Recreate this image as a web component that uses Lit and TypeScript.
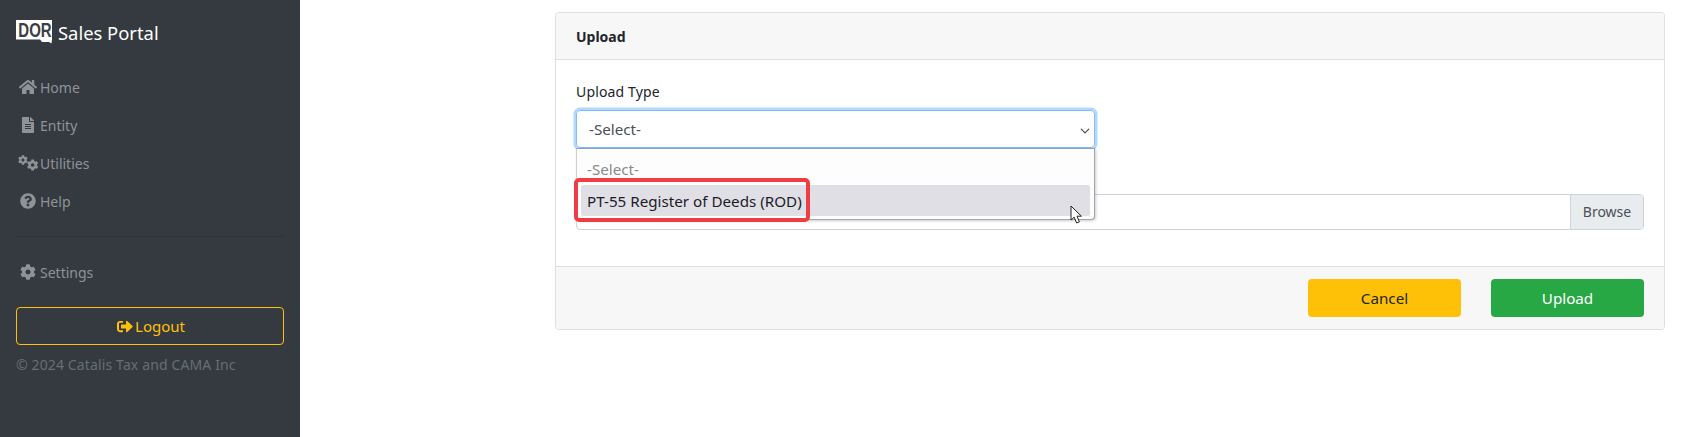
import { LitElement, html, css, svg } from "lit";
import { customElement } from "lit/decorators.js";

const COG = "M487.4 315.7l-42.6-24.6c4.3-23.2 4.3-47 0-70.2l42.6-24.6c4.9-2.8 7.1-8.6 5.5-14-11.1-35.6-30-67.8-54.7-94.6-3.8-4.1-10-5.1-14.8-2.3L380.8 110c-17.9-15.4-38.5-27.3-60.8-35.1V25.8c0-5.6-3.9-10.5-9.4-11.7-36.7-8.2-74.3-7.8-109.2 0-5.5 1.2-9.4 6.1-9.4 11.7V75c-22.2 7.9-42.8 19.8-60.8 35.1L88.7 85.5c-4.9-2.8-11-1.9-14.8 2.3-24.7 26.7-43.6 58.9-54.7 94.6-1.7 5.4.6 11.2 5.5 14L67.3 221c-4.3 23.2-4.3 47 0 70.2l-42.6 24.6c-4.9 2.8-7.1 8.6-5.5 14 11.1 35.6 30 67.8 54.7 94.6 3.8 4.1 10 5.1 14.8 2.3l42.6-24.6c17.9 15.4 38.5 27.3 60.8 35.1v49.2c0 5.6 3.9 10.5 9.4 11.7 36.7 8.2 74.3 7.8 109.2 0 5.5-1.2 9.4-6.1 9.4-11.7v-49.2c22.2-7.9 42.8-19.8 60.8-35.1l42.6 24.6c4.9 2.8 11 1.9 14.8-2.3 24.7-26.7 43.6-58.9 54.7-94.6 1.5-5.5-.7-11.3-5.6-14.1zM256 336c-44.1 0-80-35.9-80-80s35.9-80 80-80 80 35.9 80 80-35.9 80-80 80z";

const homeIcon = svg`<svg class="ic" style="width:18px;height:16px" viewBox="0 0 576 512"><path fill="currentColor" d="M280.37 148.26L96 300.11V464a16 16 0 0 0 16 16l112.06-.29a16 16 0 0 0 15.92-16V368a16 16 0 0 1 16-16h64a16 16 0 0 1 16 16v95.64a16 16 0 0 0 16 16.05L464 480a16 16 0 0 0 16-16V300L295.67 148.26a12.19 12.19 0 0 0-15.3 0zM571.6 251.47L488 182.56V44.05a12 12 0 0 0-12-12h-56a12 12 0 0 0-12 12v72.61L318.47 43a48 48 0 0 0-61 0L4.34 251.47a12 12 0 0 0-1.6 16.9l25.5 31A12 12 0 0 0 45.15 301l235.22-193.74a12.19 12.19 0 0 1 15.3 0L530.9 301a12 12 0 0 0 16.9-1.6l25.5-31a12 12 0 0 0-1.7-16.93z"/></svg>`;
const fileIcon = svg`<svg class="ic" style="width:12px;height:16px" viewBox="0 0 384 512"><path fill="currentColor" d="M224 136V0H24C10.7 0 0 10.7 0 24v464c0 13.3 10.7 24 24 24h336c13.3 0 24-10.7 24-24V160H248c-13.2 0-24-10.8-24-24zm64 236c0 6.6-5.4 12-12 12H108c-6.6 0-12-5.4-12-12v-8c0-6.6 5.4-12 12-12h168c6.6 0 12 5.4 12 12v8zm0-64c0 6.6-5.4 12-12 12H108c-6.6 0-12-5.4-12-12v-8c0-6.6 5.4-12 12-12h168c6.6 0 12 5.4 12 12v8zm0-72v8c0 6.6-5.4 12-12 12H108c-6.6 0-12-5.4-12-12v-8c0-6.6 5.4-12 12-12h168c6.6 0 12 5.4 12 12zm96-114.1v6.1H256V0h6.1c6.4 0 12.5 2.5 17 7l97.9 98c4.5 4.5 7 10.6 7 16.9z"/></svg>`;
const cogsIcon = svg`<svg class="ic" style="width:20px;height:16px" viewBox="0 0 640 512"><g fill="currentColor"><path transform="translate(0 0) scale(.62)" d="${COG}"/><path transform="translate(285 135) scale(.72)" d="${COG}"/></g></svg>`;
const helpIcon = svg`<svg class="ic" style="width:16px;height:16px" viewBox="0 0 512 512"><path fill="currentColor" d="M504 256c0 136.997-111.043 248-248 248S8 392.997 8 256C8 119.083 119.043 8 256 8s248 111.083 248 248zM262.655 90c-54.497 0-89.255 22.957-116.549 63.758-3.536 5.286-2.353 12.415 2.715 16.258l34.699 26.31c5.205 3.947 12.621 3.008 16.665-2.122 17.864-22.658 30.113-35.797 57.303-35.797 20.429 0 45.698 13.148 45.698 32.958 0 14.976-12.363 22.667-32.534 33.976C247.128 238.528 216 254.941 216 296v4c0 6.627 5.373 12 12 12h56c6.627 0 12-5.373 12-12v-1.333c0-28.462 83.186-29.647 83.186-106.667 0-58.002-60.165-102-116.531-102zM256 338c-25.365 0-46 20.635-46 46 0 25.364 20.635 46 46 46s46-20.636 46-46c0-25.365-20.635-46-46-46z"/></svg>`;
const cogIcon = svg`<svg class="ic" style="width:16px;height:16px" viewBox="0 0 512 512"><path fill="currentColor" d="${COG}"/></svg>`;
const logoutIcon = svg`<svg class="ic" style="width:16px;height:15px" viewBox="0 0 512 512" preserveAspectRatio="none"><path fill="currentColor" d="M497 273L329 441c-15 15-41 4.5-41-17v-96H152c-13.3 0-24-10.7-24-24v-96c0-13.3 10.7-24 24-24h136V88c0-21.4 25.9-32 41-17l168 168c9.3 9.4 9.3 24.6 0 34zM192 436v-40c0-6.6-5.4-12-12-12H96c-17.7 0-32-14.3-32-32V160c0-17.7 14.3-32 32-32h84c6.6 0 12-5.4 12-12V76c0-6.6-5.4-12-12-12H96c-53 0-96 43-96 96v192c0 53 43 96 96 96h84c6.6 0 12-5.4 12-12z"/></svg>`;
const logo = svg`<svg class="logo" viewBox="0 0 36 24"><path fill="#fff" d="M0 0H36V19.5L35.5 23.5L33 22H26L24 19.5H0Z"/><text transform="translate(19 17) scale(1 1.33)" text-anchor="middle" class="logotext">DOR</text></svg>`;
const cursor = svg`<svg class="cursor" viewBox="0 0 13 20"><path fill="#fff" stroke="#222" stroke-width="1" d="M1 1V15L4.2 12.2L6.6 18L9.4 16.8L7 11.2H11.4Z"/></svg>`;
const chevron = svg`<svg class="chev" viewBox="0 0 16 16"><path fill="none" stroke="#4a4f55" stroke-width="2" stroke-linecap="round" stroke-linejoin="round" d="M2 5l6 6 6-6"/></svg>`;

@customElement("app-root")
export class AppRoot extends LitElement {
  static styles = css`
    :host { display: block; height: 437px; overflow: hidden; background: #fff;
      font-family: "Noto Sans", "Open Sans", sans-serif; font-size: 14px; color: #212529; }
    .page { display: flex; height: 437px; }
    .side { width: 300px; flex: none; box-sizing: border-box; background: #343a40; padding: 0 16px; }
    .brand { height: 66px; display: flex; align-items: center; gap: 6px; color: #fff; font-size: 18.4px; margin-bottom: 2px; }
    .brand span { margin-top: -2px; }
    .logo { width: 36px; height: 24px; margin-top: -3px; overflow: visible; }
    .logotext { font: 700 15px "Liberation Sans", sans-serif; fill: #3a3f45; }
    .nav { height: 38px; display: flex; align-items: center; color: #8f9398; padding-left: 2px; }
    .icbox { width: 20px; margin-right: 2px; display: flex; justify-content: center; flex: none; }
    .ic { display: block; }
    hr { border: 0; border-top: 1px solid #2f3439; margin: 16px 0; }
    .logout { margin-top: 16px; height: 38px; box-sizing: border-box; border: 1px solid #ffc107; border-radius: 4px; color: #ffc107;
      font-size: 15px; display: flex; align-items: center; justify-content: center; gap: 2px; padding-left: 2px; }
    .copy { margin-top: 9px; line-height: 21.6px; color: #666e76; letter-spacing: .13px; }
    .main { flex: 1; padding: 12px 39px 0 255px; min-width: 0; }
    .card { border: 1px solid #dfdfdf; border-radius: 4px; background: #fff; }
    .head { height: 47px; box-sizing: border-box; background: #f7f7f7; border-bottom: 1px solid #dfdfdf; padding: 0 20px; display: flex; align-items: center; font-weight: 700; border-radius: 4px 4px 0 0; }
    .body { padding: 20px 20px 36px; }
    .lab { line-height: 23.6px; margin-bottom: 6px; display: block; letter-spacing: .15px; }
    .selwrap { position: relative; width: 519px; height: 38px; }
    .sel { box-sizing: border-box; height: 38px; border: 1px solid #80bdff; border-radius: 4px; box-shadow: 0 0 0 2.5px #b3d7ff; padding: 1px 0 0 12px; display: flex; align-items: center; color: #495057; position: relative; font-size: 15.2px; }
    .chev { width: 10px; height: 10px; position: absolute; right: 4px; top: 15px; }
    .popup { position: absolute; left: 0; top: 38px; width: 100%; height: 72px; box-sizing: border-box; background: #fdfdfd; border: 1px solid #a6a6a6; border-top-color: #8fa3b5; border-left-color: #d0d0d0; border-radius: 0 0 4px 4px; box-shadow: 1px 1px 3px rgba(0,0,0,.2); z-index: 2; font-size: 15.2px; }
    .opt0 { position: absolute; left: 10px; top: 9px; color: #8a8a8a; line-height: 22px; }
    .opt1 { position: absolute; left: 4px; right: 4px; top: 36px; height: 31px; box-sizing: border-box; padding: 2px 0 0 6px; background: #e0dfe5; border-radius: 2px; display: flex; align-items: center; color: #1c1c28; }
    .red { position: absolute; left: -3px; top: 29px; width: 236px; height: 44px; box-sizing: border-box; border: 4px solid #ee3e44; border-radius: 5px; }
    .cursor { position: absolute; left: 493px; top: 56px; width: 13px; height: 20px; }
    .file { margin-top: 46px; height: 36px; box-sizing: border-box; border: 1px solid #ced4da; border-radius: 4px; display: flex; justify-content: flex-end; }
    .browse { width: 73px; box-sizing: border-box; background: #e9ecef; border-left: 1px solid #ced4da; color: #495057; display: flex; align-items: center; justify-content: center; border-radius: 0 3px 3px 0; }
    .foot { height: 63px; box-sizing: border-box; background: #f7f7f7; border-top: 1px solid #dfdfdf; padding: 12px 20px; display: flex; justify-content: flex-end; gap: 30px; border-radius: 0 0 4px 4px; }
    .btn { width: 153px; height: 38px; box-sizing: border-box; padding-top: 1px; border-radius: 4px; display: flex; align-items: center; justify-content: center; font-size: 15.2px; }
    .warn { background: #ffc107; color: #212529; }
    .ok { background: #28a745; color: #fff; }
  `;

  private nav(icon: unknown, label: string) {
    return html`<div class="nav"><span class="icbox">${icon}</span>${label}</div>`;
  }

  render() {
    return html`<div class="page">
      <aside class="side">
        <div class="brand">${logo}<span>Sales Portal</span></div>
        ${this.nav(homeIcon, "Home")}
        ${this.nav(fileIcon, "Entity")}
        ${this.nav(cogsIcon, "Utilities")}
        ${this.nav(helpIcon, "Help")}
        <hr />
        ${this.nav(cogIcon, "Settings")}
        <div class="logout">${logoutIcon}<span>Logout</span></div>
        <div class="copy">© 2024 Catalis Tax and CAMA Inc</div>
      </aside>
      <main class="main">
        <section class="card">
          <div class="head">Upload</div>
          <div class="body">
            <label class="lab">Upload Type</label>
            <div class="selwrap">
              <div class="sel">-Select-${chevron}</div>
              <div class="popup">
                <div class="opt0">-Select-</div>
                <div class="opt1">PT-55 Register of Deeds (ROD)</div>
                <div class="red"></div>
                ${cursor}
              </div>
            </div>
            <div class="file"><div class="browse">Browse</div></div>
          </div>
          <div class="foot">
            <div class="btn warn">Cancel</div>
            <div class="btn ok">Upload</div>
          </div>
        </section>
      </main>
    </div>`;
  }
}
